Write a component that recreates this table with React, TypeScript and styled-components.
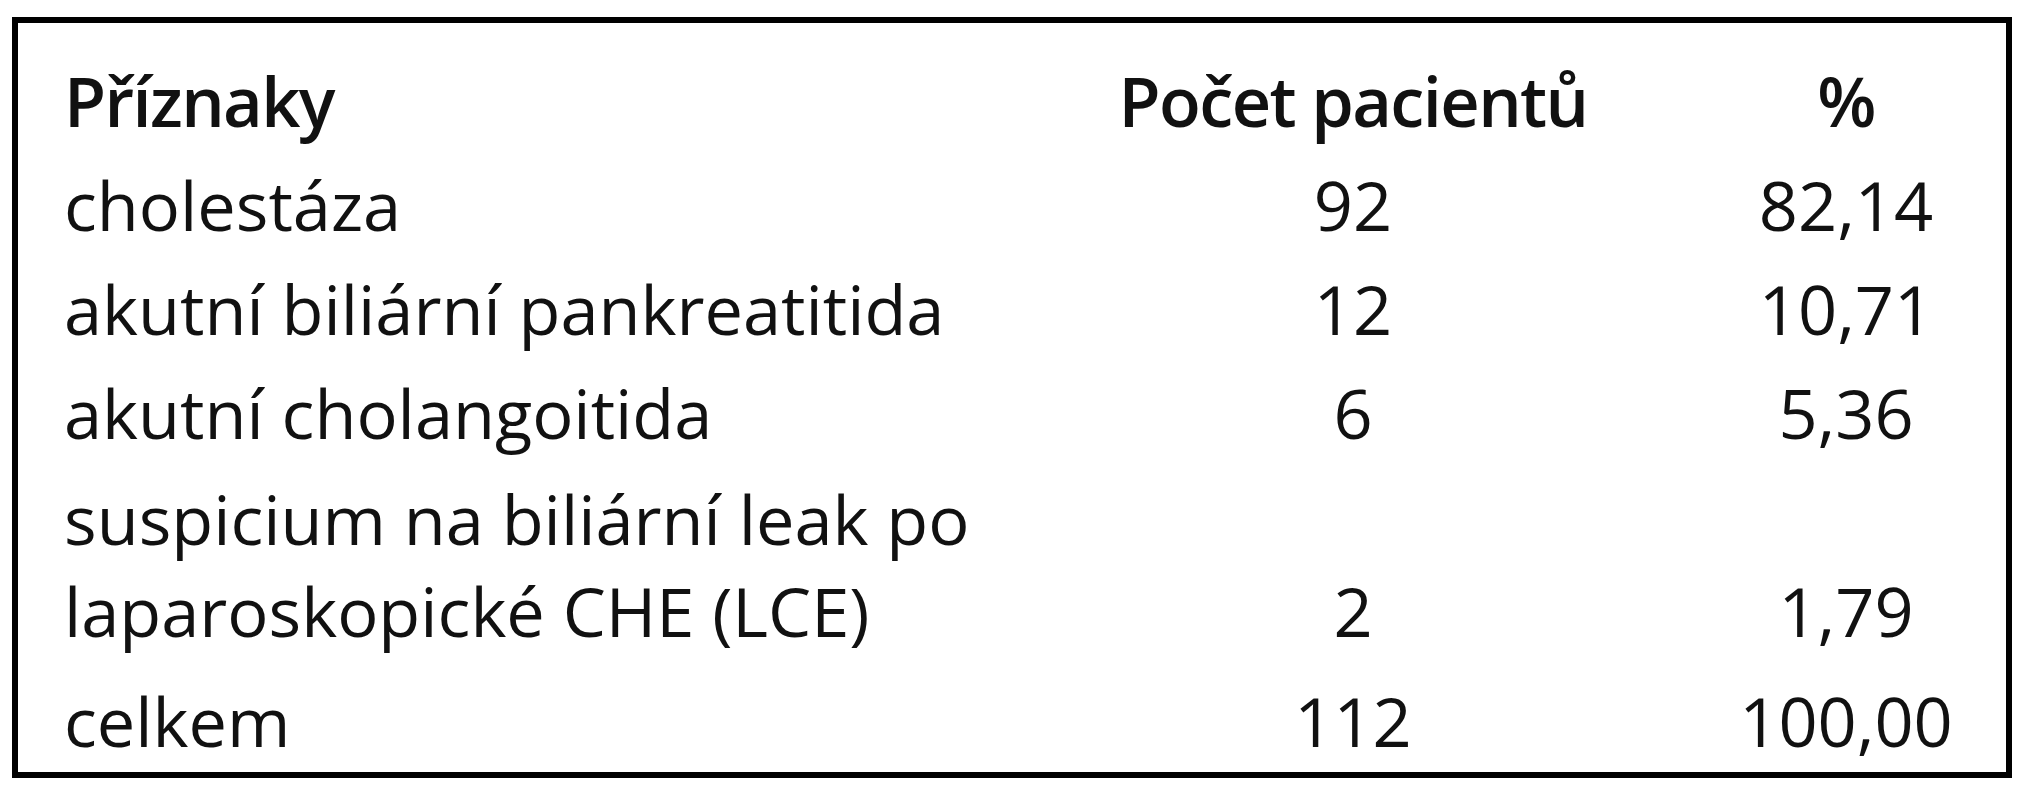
import React from "react";
import styled, { createGlobalStyle } from "styled-components";

const GlobalStyle = createGlobalStyle`
  html, body {
    margin: 0;
    padding: 0;
    background: #ffffff;
  }
  body {
    font-family: "Open Sans", "Noto Sans", sans-serif;
    color: #111111;
  }
`;

const Page = styled.div`
  padding: 17px 0 0 12px;
`;

const Frame = styled.div`
  box-sizing: border-box;
  width: 2000px;
  height: 761px;
  border: 6px solid #000000;
  padding: 26px 10px 0 46px;
`;

const Grid = styled.div`
  display: grid;
  grid-template-columns: 946px 600px 300px;
  column-gap: 43px;
  font-size: 68.5px;
  line-height: 104px;
`;

const Cell = styled.div<{ $align?: "left" | "center"; $head?: boolean; $tall?: boolean }>`
  text-align: ${(p) => p.$align ?? "left"};
  font-weight: ${(p) => (p.$head ? 600 : 400)};
  letter-spacing: ${(p) => (p.$head ? "-1.6px" : "0")};
  white-space: nowrap;
  ${(p) =>
    p.$tall
      ? `
    height: 204px;
    padding: 8px 0 12px;
    box-sizing: border-box;
    line-height: 92px;
    display: flex;
    flex-direction: column;
    justify-content: flex-end;
  `
      : ""}
`;

type Row = { label: string[]; count: string; pct: string };

const rows: Row[] = [
  { label: ["cholestáza"], count: "92", pct: "82,14" },
  { label: ["akutní biliární pankreatitida"], count: "12", pct: "10,71" },
  { label: ["akutní cholangoitida"], count: "6", pct: "5,36" },
  {
    label: ["suspicium na biliární leak po", "laparoskopické CHE (LCE)"],
    count: "2",
    pct: "1,79",
  },
  { label: ["celkem"], count: "112", pct: "100,00" },
];

export default function App() {
  return (
    <>
      <GlobalStyle />
      <Page>
        <Frame>
          <Grid>
            <Cell $head>Příznaky</Cell>
            <Cell $head $align="center">Počet pacientů</Cell>
            <Cell $head $align="center">%</Cell>
            {rows.map((r) => {
              const tall = r.label.length > 1;
              return (
                <React.Fragment key={r.label[0]}>
                  <Cell $tall={tall}>
                    {r.label.map((l) => (
                      <div key={l}>{l}</div>
                    ))}
                  </Cell>
                  <Cell $align="center" $tall={tall}>
                    <div>{r.count}</div>
                  </Cell>
                  <Cell $align="center" $tall={tall}>
                    <div>{r.pct}</div>
                  </Cell>
                </React.Fragment>
              );
            })}
          </Grid>
        </Frame>
      </Page>
    </>
  );
}
